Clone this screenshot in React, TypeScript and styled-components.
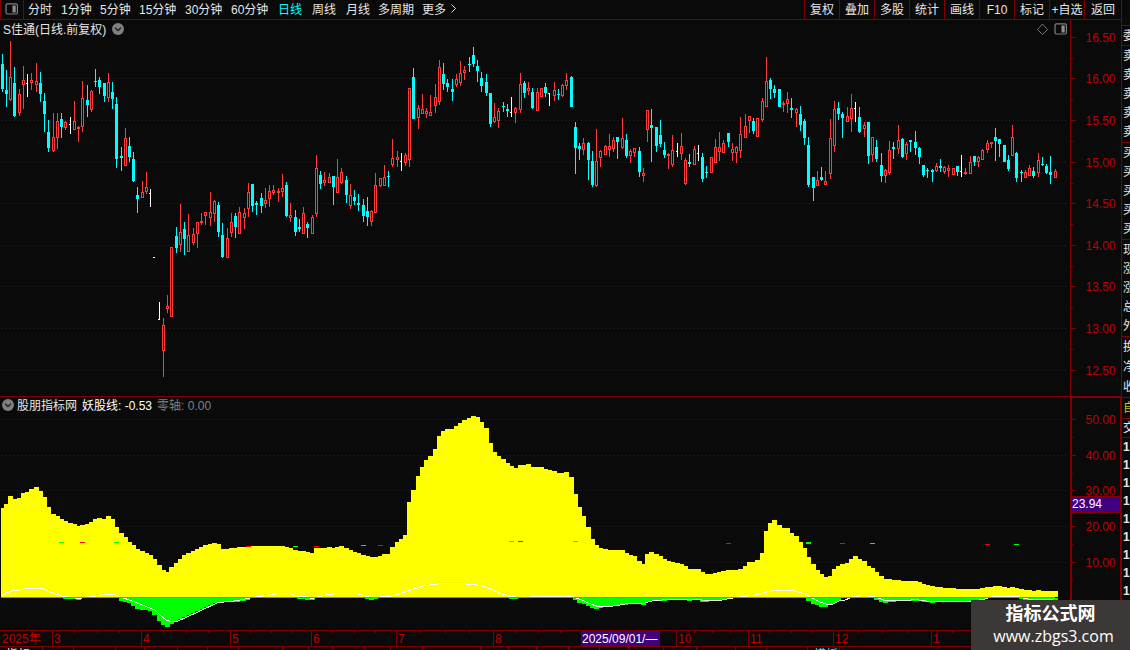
import styled, { createGlobalStyle } from "styled-components"

const colors = {
  background: "#0a0a0a",
  line: "#800000",
  grid: "#6a0808",
  axisText: "#c00000",
  up: "#ff3c3c",
  down: "#00ffff",
  text: "#e6e6e6",
  muted: "#808080",
  badge: "#400080",
}

const GlobalStyle = createGlobalStyle`
  body {
    margin: 0;
    background-color: ${colors.background};
    color: ${colors.text};
    font-family: "Liberation Sans", "Noto Sans CJK SC", sans-serif;
    font-size: 12px;
    line-height: 16px;
    overflow: hidden;
  }
`

const Screen = styled.div`
  display: flex;
  width: 1130px;
  height: 650px;
  overflow: hidden;
  white-space: nowrap;
`
const Main = styled.main`
  display: flex;
  flex-direction: column;
  width: 1121px;
  flex: none;
`
const Header = styled.header`
  display: flex;
  height: 19px;
  border-bottom: 1px solid ${colors.line};
`
const LayoutButton = styled.div`
  box-sizing: border-box;
  width: 24px;
  padding: 3px 0 0 4px;
  border-left: 1px solid ${colors.line};
  border-right: 1px solid ${colors.line};
  line-height: 0;
`
const Periods = styled.nav`
  display: flex;
  flex: 1;
  padding-left: 4px;
`
interface PeriodProps {
  $width: number
  $active?: boolean
}
const Period = styled.span<PeriodProps>`
  width: ${props => props.$width}px;
  line-height: 21px;
  color: ${props => (props.$active ? colors.down : colors.text)};
`
const MoreArrow = styled.svg`
  margin-top: 4px;
`
const Tool = styled.span<{ $width: number }>`
  box-sizing: border-box;
  width: ${props => props.$width}px;
  height: 19px;
  border-left: 1px solid ${colors.line};
  line-height: 21px;
  text-align: center;
`
const Pane = styled.section<{ $height: number }>`
  position: relative;
  height: ${props => props.$height}px;
`
const Plot = styled.svg`
  display: block;
  shape-rendering: crispEdges;
`
const AxisLabel = styled.text`
  fill: ${colors.axisText};
  font-size: 12px;
`
const PaneTitle = styled.div<{ $left: number }>`
  position: absolute;
  left: ${props => props.$left}px;
  top: 0;
  display: flex;
  align-items: center;
  gap: 5px;
  line-height: 16px;
`
const Name = styled.span`
  padding-top: 2px;
`
const Value = styled(Name)<{ $muted?: boolean }>`
  color: ${props => (props.$muted ? colors.muted : "#ffffff")};
`
const FoldSvg = styled.svg<{ $before?: boolean }>`
  margin: ${props => (props.$before ? "0 -2px 0 0" : "0 0 0 1px")};
`
const PaneTools = styled.div`
  position: absolute;
  left: 1036px;
  top: 3px;
  display: flex;
  gap: 6px;
`
const AxisBadge = styled.div`
  position: absolute;
  left: 1072px;
  top: 100px;
  width: 48px;
  height: 15px;
  border-top: 1px solid ${colors.line};
  border-bottom: 1px solid ${colors.line};
  background-color: ${colors.badge};
  color: #ffffff;
  line-height: 15px;
`
const TimeAxis = styled.div`
  position: relative;
  display: flex;
  height: 15px;
  border-top: 1px solid ${colors.line};
  border-bottom: 1px solid ${colors.line};
  color: ${colors.axisText};
`
const Month = styled.span<{ $width: number; $first?: boolean }>`
  box-sizing: border-box;
  width: ${props => props.$width}px;
  height: 15px;
  padding-left: ${props => (props.$first ? 2 : 1)}px;
  border-left: ${props => (props.$first ? "none" : `1px solid ${colors.line}`)};
  line-height: 16px;
`
const TimeTicks = styled.svg`
  position: absolute;
  left: 0;
  top: 0;
`
const DateBadge = styled.span`
  position: absolute;
  left: 581px;
  top: 0;
  width: 78px;
  height: 15px;
  padding-left: 1px;
  background-color: ${colors.badge};
  color: #ffffff;
  line-height: 16px;
`
const Tabs = styled.footer`
  display: flex;
  height: 3px;
  overflow: hidden;
`
const Tab = styled.span<{ $width: number; $accent?: boolean }>`
  box-sizing: border-box;
  width: ${props => props.$width}px;
  padding-left: 6px;
  border-right: 1px solid ${colors.line};
  color: ${props => (props.$accent ? colors.down : colors.text)};
  line-height: 17px;
`
const Side = styled.aside`
  display: flex;
  flex-direction: column;
  box-sizing: border-box;
  width: 9px;
  padding-top: 25px;
  border-left: 1px solid ${colors.line};
  overflow: hidden;
`
interface SideGroupProps {
  $height: number
  $color?: string
  $bold?: boolean
}
const SideGroup = styled.div<SideGroupProps>`
  display: flex;
  flex-direction: column;
  flex: none;
  box-sizing: border-box;
  height: ${props => props.$height}px;
  padding-left: 1px;
  border-top: 1px solid ${colors.line};
  color: ${props => props.$color || colors.text};
  font-weight: ${props => (props.$bold ? 700 : 400)};
`
const SideRow = styled.span`
  display: flex;
  flex: 1;
  align-items: center;
`
const Watermark = styled.div`
  position: absolute;
  left: 971px;
  top: 600px;
  display: flex;
  flex-direction: column;
  align-items: center;
  width: 159px;
  height: 50px;
  box-sizing: border-box;
  background-color: #3d3838;
  color: #ffffff;
`
const WatermarkName = styled.strong`
  padding-top: 3px;
  font-size: 18px;
  line-height: 23px;
`
const WatermarkUrl = styled.span`
  padding-left: 6px;
  font-family: "Open Sans", sans-serif;
  font-size: 16px;
  line-height: 20px;
`

type Kind = "u" | "d" | "f"
// kind, x, high, body top, body bottom, low
type Candle = [Kind, number, number, number, number, number]

const candles: Candle[] = [
  ["d", 2, 54, 64, 89, 92], ["d", 6, 70, 90, 94, 107], ["u", 10, 41, 77, 100, 101], ["d", 14, 67, 83, 116, 117],
  ["u", 19, 89, 94, 113, 116], ["u", 23, 66, 80, 85, 109], ["f", 27, 74, 83, 84, 97], ["u", 31, 73, 80, 83, 90],
  ["u", 36, 63, 81, 85, 92], ["d", 40, 72, 83, 94, 102], ["d", 44, 93, 101, 114, 132], ["d", 48, 120, 132, 148, 152],
  ["u", 53, 113, 137, 151, 152], ["u", 57, 113, 121, 138, 149], ["d", 61, 113, 119, 127, 138], ["u", 65, 121, 122, 128, 130],
  ["f", 70, 117, 124, 125, 134], ["u", 74, 101, 121, 130, 130], ["u", 78, 126, 127, 129, 142], ["u", 82, 81, 98, 127, 132],
  ["d", 87, 85, 100, 105, 117], ["u", 91, 90, 91, 110, 112], ["d", 95, 69, 81, 82, 87], ["d", 99, 77, 80, 87, 94],
  ["d", 104, 83, 83, 96, 102], ["u", 108, 73, 82, 98, 102], ["d", 112, 82, 92, 99, 109], ["d", 116, 97, 104, 159, 168],
  ["d", 121, 147, 156, 158, 171], ["u", 125, 128, 138, 166, 166], ["d", 129, 137, 146, 157, 162], ["d", 133, 152, 159, 181, 182],
  ["d", 137, 187, 195, 199, 213], ["u", 142, 181, 192, 198, 198], ["u", 146, 172, 187, 192, 194], ["f", 150, 189, 193, 194, 207],
  ["f", 154, 257, 257, 258, 258], ["f", 159, 302, 319, 320, 320], ["u", 163, 318, 325, 351, 377], ["u", 167, 295, 306, 309, 313],
  ["u", 171, 247, 247, 317, 317], ["d", 176, 227, 236, 248, 253], ["u", 180, 204, 232, 245, 252], ["d", 184, 222, 229, 239, 255],
  ["u", 188, 214, 235, 252, 252], ["u", 193, 228, 234, 243, 245], ["u", 197, 222, 222, 234, 248], ["u", 201, 213, 221, 223, 225],
  ["u", 205, 212, 212, 216, 225], ["u", 210, 192, 212, 218, 226], ["u", 214, 200, 201, 214, 222], ["d", 218, 202, 205, 232, 237],
  ["d", 222, 223, 235, 257, 258], ["u", 227, 228, 238, 258, 258], ["u", 231, 213, 222, 233, 237], ["d", 235, 213, 216, 227, 238],
  ["u", 239, 207, 212, 234, 234], ["u", 244, 208, 213, 218, 229], ["u", 248, 183, 192, 209, 217], ["d", 252, 184, 184, 206, 212],
  ["d", 256, 201, 203, 205, 215], ["d", 261, 193, 198, 206, 213], ["u", 265, 188, 200, 204, 208], ["u", 269, 185, 191, 199, 207],
  ["u", 273, 185, 190, 193, 195], ["u", 278, 188, 191, 193, 202], ["u", 282, 174, 188, 192, 197], ["d", 286, 182, 185, 216, 217],
  ["u", 290, 203, 215, 218, 222], ["d", 295, 210, 217, 232, 236], ["d", 299, 219, 227, 229, 232], ["u", 303, 207, 213, 234, 234],
  ["d", 307, 222, 224, 228, 238], ["u", 312, 215, 217, 234, 234], ["u", 316, 155, 168, 214, 217], ["d", 320, 171, 175, 184, 189],
  ["u", 324, 172, 180, 183, 186], ["u", 329, 173, 177, 183, 183], ["d", 333, 176, 176, 187, 205], ["u", 337, 159, 177, 193, 193],
  ["u", 341, 168, 172, 183, 184], ["d", 346, 176, 180, 195, 203], ["u", 350, 184, 195, 206, 209], ["d", 354, 190, 197, 201, 205],
  ["d", 358, 194, 203, 205, 211], ["d", 363, 199, 205, 216, 222], ["d", 367, 197, 211, 217, 226], ["u", 371, 210, 211, 222, 226],
  ["u", 375, 173, 185, 213, 213], ["u", 380, 178, 178, 186, 187], ["u", 384, 165, 177, 186, 186], ["d", 388, 171, 176, 177, 187],
  ["u", 392, 139, 158, 165, 167], ["u", 397, 151, 157, 160, 167], ["f", 401, 153, 161, 162, 171], ["u", 405, 153, 155, 163, 166],
  ["u", 409, 88, 88, 160, 167], ["d", 413, 68, 77, 119, 119], ["u", 418, 105, 108, 118, 129], ["u", 422, 94, 109, 114, 114],
  ["u", 426, 108, 111, 114, 118], ["u", 430, 95, 112, 116, 116], ["u", 435, 84, 97, 106, 113], ["u", 439, 60, 67, 102, 105],
  ["d", 443, 63, 74, 84, 90], ["d", 447, 79, 83, 87, 92], ["d", 452, 79, 89, 92, 101], ["u", 456, 74, 79, 85, 87],
  ["u", 460, 61, 73, 83, 86], ["u", 464, 66, 70, 73, 80], ["d", 469, 57, 64, 65, 72], ["d", 473, 47, 55, 64, 67],
  ["d", 477, 60, 66, 71, 82], ["d", 481, 72, 78, 86, 92], ["d", 486, 74, 82, 93, 96], ["d", 490, 93, 93, 124, 127],
  ["u", 494, 103, 117, 122, 123], ["u", 498, 108, 111, 121, 128], ["d", 503, 102, 106, 107, 112], ["d", 507, 104, 109, 111, 117],
  ["f", 511, 97, 112, 113, 117], ["u", 515, 107, 108, 113, 123], ["u", 520, 73, 84, 110, 113], ["d", 524, 81, 83, 93, 98],
  ["u", 528, 82, 88, 91, 95], ["d", 532, 88, 92, 108, 109], ["u", 537, 88, 92, 111, 111], ["u", 541, 88, 88, 97, 97],
  ["d", 545, 83, 87, 93, 97], ["f", 549, 93, 93, 94, 106], ["u", 554, 82, 90, 96, 101], ["d", 558, 89, 94, 95, 100],
  ["u", 562, 84, 85, 96, 97], ["u", 566, 73, 80, 86, 90], ["d", 571, 76, 77, 107, 107], ["d", 575, 122, 127, 148, 174],
  ["d", 579, 143, 146, 149, 160], ["u", 583, 138, 143, 150, 155], ["d", 588, 142, 143, 160, 180], ["d", 592, 151, 161, 185, 187],
  ["u", 596, 129, 161, 186, 187], ["u", 600, 150, 151, 158, 167], ["u", 605, 145, 146, 155, 155], ["u", 609, 134, 146, 150, 157],
  ["u", 613, 137, 140, 149, 152], ["d", 617, 137, 137, 142, 159], ["u", 622, 118, 138, 148, 149], ["d", 626, 134, 140, 156, 158],
  ["u", 630, 149, 151, 156, 163], ["u", 634, 148, 148, 153, 157], ["d", 639, 147, 151, 172, 177], ["u", 643, 168, 173, 176, 182],
  ["u", 647, 110, 110, 130, 142], ["d", 651, 109, 125, 128, 162], ["d", 656, 127, 127, 146, 152], ["d", 660, 120, 135, 144, 147],
  ["d", 664, 142, 150, 155, 158], ["u", 668, 153, 154, 156, 169], ["u", 672, 135, 150, 165, 167], ["f", 677, 143, 151, 152, 157],
  ["u", 681, 133, 146, 154, 160], ["u", 685, 158, 160, 184, 185], ["d", 689, 154, 162, 164, 167], ["u", 694, 146, 149, 165, 165],
  ["f", 698, 145, 153, 154, 161], ["d", 702, 153, 157, 179, 182], ["d", 706, 166, 172, 173, 178], ["u", 711, 157, 157, 173, 173],
  ["u", 715, 139, 147, 163, 163], ["u", 719, 132, 147, 152, 161], ["u", 723, 140, 143, 153, 153], ["d", 728, 133, 133, 142, 147],
  ["u", 732, 143, 149, 153, 161], ["u", 736, 146, 147, 153, 163], ["u", 740, 117, 134, 151, 158], ["u", 745, 114, 126, 138, 138],
  ["u", 749, 116, 116, 121, 133], ["d", 753, 118, 121, 131, 134], ["u", 757, 118, 118, 137, 137], ["u", 762, 98, 101, 120, 122],
  ["u", 766, 57, 81, 107, 107], ["d", 770, 78, 80, 89, 99], ["d", 774, 85, 89, 93, 98], ["d", 779, 89, 89, 107, 107],
  ["u", 783, 101, 103, 105, 112], ["u", 787, 92, 99, 104, 113], ["d", 791, 98, 108, 110, 118], ["u", 796, 108, 109, 113, 127],
  ["d", 800, 106, 114, 125, 131], ["d", 804, 119, 121, 138, 145], ["d", 808, 137, 145, 185, 187], ["d", 813, 177, 177, 188, 201],
  ["u", 817, 171, 180, 186, 186], ["d", 821, 167, 177, 180, 181], ["u", 825, 171, 181, 185, 185], ["u", 830, 119, 138, 174, 179],
  ["u", 834, 101, 109, 146, 152], ["d", 838, 102, 108, 114, 120], ["d", 842, 112, 114, 118, 138], ["u", 847, 107, 116, 122, 122],
  ["u", 851, 94, 108, 119, 132], ["f", 855, 102, 108, 109, 122], ["d", 859, 107, 117, 132, 133], ["u", 864, 122, 125, 129, 137],
  ["d", 868, 122, 122, 156, 164], ["u", 872, 137, 137, 155, 162], ["d", 876, 140, 147, 159, 162], ["d", 881, 153, 165, 176, 182],
  ["u", 885, 169, 170, 176, 183], ["u", 889, 141, 150, 173, 175], ["d", 893, 142, 147, 149, 159], ["u", 898, 125, 140, 149, 154],
  ["d", 902, 138, 139, 157, 158], ["u", 906, 142, 144, 154, 160], ["d", 910, 140, 140, 142, 152], ["d", 915, 131, 142, 148, 155],
  ["d", 919, 147, 148, 157, 164], ["d", 923, 165, 165, 175, 177], ["d", 927, 168, 170, 171, 178], ["d", 932, 169, 170, 172, 182],
  ["u", 936, 163, 166, 171, 172], ["d", 940, 159, 166, 168, 172], ["u", 944, 166, 167, 172, 174], ["u", 948, 165, 168, 171, 177],
  ["u", 953, 168, 168, 175, 175], ["d", 957, 166, 166, 172, 176], ["f", 961, 155, 171, 172, 177], ["u", 965, 168, 172, 174, 175],
  ["u", 970, 156, 162, 174, 174], ["d", 974, 156, 156, 162, 166], ["u", 978, 156, 157, 162, 167], ["u", 982, 149, 150, 160, 160],
  ["u", 987, 140, 143, 150, 153], ["u", 991, 142, 142, 144, 148], ["d", 995, 128, 137, 141, 161], ["d", 999, 139, 139, 144, 157],
  ["d", 1004, 145, 145, 162, 162], ["d", 1008, 155, 160, 169, 171], ["u", 1012, 125, 137, 156, 156], ["d", 1016, 152, 153, 178, 182],
  ["d", 1021, 170, 172, 173, 182], ["u", 1025, 170, 172, 178, 178], ["u", 1029, 165, 168, 176, 176], ["d", 1033, 167, 171, 176, 178],
  ["u", 1038, 153, 160, 173, 177], ["d", 1042, 157, 164, 165, 166], ["d", 1046, 164, 166, 173, 174], ["d", 1050, 156, 172, 175, 184],
  ["u", 1055, 169, 171, 178, 178],
]

type Point = [number, number]

// each step holds its level until the next x
const strength: Point[] = [
  [1, 508], [4, 504], [8, 496], [13, 499], [17, 498], [21, 493], [25, 492], [29, 489], [34, 487], [39, 491],
  [43, 497], [47, 507], [51, 514], [56, 516], [60, 519], [64, 521], [68, 523], [73, 524], [77, 526], [80, 525],
  [85, 524], [89, 522], [93, 519], [97, 518], [102, 519], [106, 516], [111, 519], [115, 527], [119, 533], [124, 537],
  [128, 542], [132, 545], [136, 549], [140, 551], [145, 553], [149, 555], [153, 559], [157, 565], [162, 570], [166, 572],
  [169, 567], [174, 563], [178, 559], [182, 555], [186, 553], [191, 551], [195, 549], [199, 547], [203, 545], [208, 544],
  [212, 543], [217, 544], [221, 549], [229, 548], [237, 547], [251, 546], [285, 547], [289, 548], [293, 550], [298, 551],
  [306, 552], [310, 553], [314, 548], [327, 547], [332, 548], [335, 547], [339, 546], [344, 548], [349, 550], [353, 552],
  [357, 553], [361, 555], [366, 556], [370, 557], [378, 556], [382, 554], [390, 547], [395, 542], [399, 539], [403, 535],
  [407, 502], [411, 490], [416, 476], [420, 467], [424, 460], [428, 456], [433, 449], [437, 436], [441, 431], [445, 429],
  [454, 426], [458, 423], [462, 420], [467, 418], [471, 416], [476, 417], [480, 422], [484, 428], [489, 443], [493, 452],
  [497, 456], [501, 459], [506, 463], [510, 466], [514, 468], [518, 465], [526, 464], [531, 467], [544, 469], [548, 470],
  [552, 471], [557, 473], [564, 472], [569, 477], [574, 494], [578, 507], [582, 516], [586, 527], [591, 539], [595, 545],
  [599, 548], [603, 549], [608, 550], [625, 553], [629, 555], [633, 556], [637, 561], [642, 564], [645, 554], [649, 552],
  [654, 554], [659, 556], [663, 559], [667, 561], [671, 562], [675, 563], [680, 564], [684, 566], [688, 569], [701, 572],
  [705, 574], [713, 573], [717, 572], [721, 571], [726, 570], [738, 569], [743, 566], [747, 562], [755, 560], [760, 553],
  [764, 531], [768, 523], [772, 520], [777, 525], [782, 528], [790, 533], [794, 536], [799, 542], [803, 548], [807, 557],
  [811, 564], [816, 570], [820, 574], [824, 577], [828, 576], [832, 569], [836, 566], [840, 564], [845, 563], [849, 559],
  [853, 556], [858, 559], [862, 561], [867, 566], [871, 568], [875, 572], [879, 576], [884, 579], [892, 580], [901, 581],
  [918, 582], [922, 584], [926, 585], [930, 586], [935, 587], [943, 588], [956, 589], [980, 588], [985, 587], [993, 586],
  [1002, 587], [1007, 588], [1010, 587], [1015, 588], [1019, 589], [1024, 590], [1032, 591], [1036, 590], [1041, 591],
]

const weakness: Point[] = [
  [63, 599], [76, 600], [81, 598], [119, 601], [123, 602], [127, 603], [131, 606], [135, 609], [140, 610], [148, 611],
  [152, 615], [157, 621], [161, 625], [165, 627], [170, 624], [174, 622], [178, 619], [182, 617], [187, 615], [191, 613],
  [195, 611], [200, 609], [204, 607], [208, 605], [213, 603], [218, 602], [240, 601], [246, 600], [250, 598], [297, 599],
  [305, 600], [315, 598], [365, 599], [369, 600], [374, 599], [378, 598], [509, 599], [518, 598], [573, 600], [577, 603],
  [582, 604], [586, 606], [590, 608], [594, 609], [599, 608], [603, 607], [607, 606], [620, 605], [628, 604], [641, 605],
  [646, 602], [650, 601], [667, 600], [687, 601], [692, 600], [700, 602], [709, 601], [722, 599], [733, 598], [806, 601],
  [811, 604], [815, 605], [819, 607], [828, 605], [833, 603], [837, 601], [841, 598], [874, 600], [879, 602], [883, 603],
  [888, 602], [896, 601], [922, 602], [930, 603], [935, 602], [971, 602], [985, 598], [1019, 599], [1023, 600],
]

const signal: Point[] = [
  [2, 596], [6, 593], [12, 591], [20, 590], [26, 588.5], [43, 588.5], [50, 592], [56, 594], [62, 596], [68, 597],
  [78, 598.5], [93, 596.5], [104, 594.5], [115, 594.5], [120, 597], [125, 598.5], [135, 602], [147, 607], [155, 610], [160, 615],
  [166, 620], [171, 621.5], [178, 621], [187, 617], [200, 611], [218, 602.5], [230, 601.5], [238, 600.5], [245, 599], [255, 597],
  [267, 595.5], [277, 593.5], [289, 593.5], [297, 596], [305, 596.5], [312, 598.5], [320, 596.5], [328, 594.5], [338, 593.5],
  [356, 593.5], [365, 596], [369, 597], [380, 597], [390, 596.5], [399, 594], [403, 592.5], [412, 589.5], [423, 586],
  [433, 584.5], [443, 583.5], [455, 583.5], [475, 584.5], [487, 587.5], [495, 591], [503, 594.5], [510, 596.5], [520, 597.5],
  [540, 596.5], [573, 596.5], [577, 598.5], [582, 600], [587, 602.5], [592, 604.5], [598, 606.5], [610, 606.5], [620, 605],
  [628, 603.5], [643, 603.5], [652, 601], [667, 599.5], [700, 599.5], [703, 600.5], [720, 600.5], [727, 599], [733, 598],
  [743, 596.5], [755, 595], [763, 593], [773, 590.5], [793, 590.5], [805, 594], [812, 598], [820, 602], [827, 604.5],
  [832, 604.5], [840, 600.5], [845, 600], [850, 598], [855, 596.5], [863, 595.5], [873, 596.5], [878, 598], [885, 600.5],
  [907, 600.5], [915, 599.5], [922, 600.5], [930, 601.5], [971, 601.5], [985, 599], [993, 596.5], [1019, 596.5],
  [1024, 598.5], [1032, 599.5], [1053, 599.5],
]

// x, y, buy mark
const marks: [number, number, boolean][] = [
  [59, 542, false], [80, 542, true], [114, 542, false], [246, 546, true], [293, 546, false], [314, 546, true],
  [361, 545, false], [378, 545, true], [509, 541, false], [518, 541, true], [573, 541, false], [726, 543, true],
  [806, 542, false], [840, 543, true], [870, 543, false], [985, 544, true], [1014, 544, false],
]

const priceTicks: [string, number][] = [
  ["16.50", 37], ["16.00", 78], ["15.50", 120], ["15.00", 162], ["14.50", 203],
  ["14.00", 245], ["13.50", 286], ["13.00", 328], ["12.50", 370],
]
const strengthTicks: [string, number][] = [
  ["50.00", 419], ["40.00", 455], ["30.00", 490], ["20.00", 526], ["10.00", 562],
]

const periods: [string, number][] = [
  ["分时", 33], ["1分钟", 39], ["5分钟", 39], ["15分钟", 46], ["30分钟", 46], ["60分钟", 47],
  ["日线", 34], ["周线", 34], ["月线", 32], ["多周期", 44], ["更多", 28],
]
const tools = ["复权", "叠加", "多股", "统计", "画线", "F10", "标记", "+自选", "返回"]

const months: [string, number][] = [
  ["2025年", 52], ["3", 89], ["4", 89], ["5", 81], ["6", 85], ["7", 97], ["8", 183],
  ["10", 72], ["11", 85], ["12", 98], ["1", 190],
]
const weekTicks = [
  74, 97, 119, 163, 186, 208, 250, 271, 291, 332, 354, 375, 420, 445, 469, 515, 538, 560, 694, 712, 730, 769, 791,
  812, 858, 882, 907, 952,
]
const tabWidths = [43, 31, 42, 29, 33, 30, 31, 44, 26, 24, 32, 26, 32, 58, 28, 28, 32, 31, 29, 35, 33, 39, 31, 41, 32]

const sideGroups: { rows: string; height: number; color?: string; bold?: boolean }[] = [
  { rows: "委", height: 20 },
  { rows: "卖卖卖卖卖", height: 97 },
  { rows: "买买买买买", height: 97 },
  { rows: "现涨涨总外", height: 97 },
  { rows: "换净收", height: 61 },
  { rows: "自", height: 21, color: "#c8c800" },
  { rows: "交", height: 19 },
  { rows: "111111111", height: 163, bold: true },
]

const stepPath = (steps: Point[], base: number, end: number) =>
  `M${steps[0][0]} ${base}` +
  steps.map(([x, y], i) => `V${y}H${i + 1 < steps.length ? steps[i + 1][0] : end}`).join("") +
  `V${base}Z`

const CandleShape = ({ candle }: { candle: Candle }) => {
  const [kind, x, high, top, bottom, low] = candle
  if (kind === "f") {
    return (
      <g fill="#ffffff">
        <rect x={x} y={high} width={1} height={low - high} />
        <rect x={x - 1} y={top} width={2} height={1} />
      </g>
    )
  }
  return (
    <g fill={kind === "u" ? colors.up : colors.down}>
      <rect x={x} y={high} width={1} height={low - high} />
      <rect x={x - 1} y={top} width={3} height={bottom - top} />
      {kind === "u" && bottom - top > 2 && (
        <rect x={x} y={top + 1} width={1} height={bottom - top - 2} fill={colors.background} />
      )}
    </g>
  )
}

const GridLines = ({ ticks }: { ticks: [string, number][] }) => (
  <g stroke={colors.grid} strokeDasharray="1 3">
    {ticks.map(([label, y]) => (
      <line key={label} x1={1} x2={1068} y1={y + 0.5} y2={y + 0.5} />
    ))}
  </g>
)

interface AxisProps {
  ticks: [string, number][]
  minor: number
  minorEnd: number
}
const Axis = ({ ticks, minor, minorEnd }: AxisProps) => (
  <g>
    {ticks.map(([label, y]) => (
      <g key={label} fill={colors.line}>
        <rect x={1070} y={y} width={6} height={1} />
        {y + minor < minorEnd && <rect x={1070} y={y + minor} width={3} height={1} />}
        <AxisLabel x={1085.5} y={y + 5}>
          {label}
        </AxisLabel>
      </g>
    ))}
  </g>
)

const LayoutIcon = () => (
  <svg width="14" height="12" viewBox="0 0 14 12">
    <rect x="1" y="0.8" width="11.4" height="10.2" rx="1.5" fill="none" stroke={colors.muted} strokeWidth="1.2" />
    <rect x="7.5" y="2.5" width="3.2" height="7" fill="#909090" />
  </svg>
)

const FoldIcon = ({ before }: { before?: boolean }) => (
  <FoldSvg $before={before} width="12" height="12" viewBox="0 0 12 12">
    <circle cx="6" cy="6" r="6" fill={colors.muted} />
    <path d="M3 4.8 6 7.6 9 4.8" fill="none" stroke="#202020" strokeWidth="1.4" />
  </FoldSvg>
)

const App = () => {
  return (
    <Screen>
      <GlobalStyle />
      <Main>
        <Header>
          <LayoutButton>
            <LayoutIcon />
          </LayoutButton>
          <Periods>
            {periods.map(([label, width]) => (
              <Period key={label} $width={width} $active={label === "日线"}>
                {label}
              </Period>
            ))}
            <MoreArrow width="7" height="10" viewBox="0 0 7 10">
              <path d="M1.5 0.5 5.5 4.5 1.5 8.5" fill="none" stroke={colors.text} />
            </MoreArrow>
          </Periods>
          {tools.map((label, index) => (
            <Tool key={label} $width={index === tools.length - 1 ? 37 : 35}>
              {label}
            </Tool>
          ))}
        </Header>
        <Pane $height={376}>
          <Plot width="1121" height="376" viewBox="0 20 1121 376">
            <GridLines ticks={priceTicks.slice(1)} />
            {candles.map(candle => (
              <CandleShape key={candle[1]} candle={candle} />
            ))}
            <rect x={1070} y={20} width={1} height={376} fill={colors.line} />
            <Axis ticks={priceTicks} minor={21} minorEnd={360} />
          </Plot>
          <PaneTitle $left={3}>
            <Name>S佳通(日线.前复权)</Name>
            <FoldIcon />
          </PaneTitle>
          <PaneTools>
            <svg width="12" height="12" viewBox="0 0 12 12">
              <path d="M6.5 1 11.5 6.5 6.5 11.5 1.5 6.5Z" fill="none" stroke={colors.muted} strokeWidth="0.9" />
            </svg>
            <LayoutIcon />
          </PaneTools>
        </Pane>
        <Pane $height={234}>
          <Plot width="1121" height="234" viewBox="0 396 1121 234">
            <GridLines ticks={strengthTicks} />
            <path d={stepPath(strength, 597, 1058)} fill="#ffff00" />
            <path d={stepPath(weakness, 598, 1058)} fill="#00ff00" />
            {marks.map(([x, y, buy]) => (
              <rect key={x} x={x} y={y} width={5} height={x === 806 ? 2 : 1} fill={buy ? "#ff0000" : "#00ff00"} />
            ))}
            <polyline points={signal.join(" ")} fill="none" stroke="#ffffff" />
            <rect x={1} y={597} width={1054} height={1} fill={colors.muted} />
            <g fill={colors.line}>
              <rect x={0} y={396} width={1121} height={1} />
              <rect x={1070} y={396} width={51} height={2} />
              <rect x={1070} y={396} width={2} height={234} />
              <rect x={1120} y={396} width={1} height={234} />
            </g>
            <Axis ticks={strengthTicks} minor={18} minorEnd={600} />
          </Plot>
          <PaneTitle $left={2}>
            <FoldIcon before />
            <Name>股朋指标网</Name>
            <Value>妖股线: -0.53</Value>
            <Value $muted>零轴: 0.00</Value>
          </PaneTitle>
          <AxisBadge>23.94</AxisBadge>
        </Pane>
        <TimeAxis>
          {months.map(([label, width], index) => (
            <Month key={label} $width={width} $first={index === 0}>
              {label}
            </Month>
          ))}
          <TimeTicks width="1121" height="2">
            {weekTicks.map(x => (
              <rect key={x} x={x} y={0} width={1} height={2} fill={colors.line} />
            ))}
          </TimeTicks>
          <DateBadge>2025/09/01/—</DateBadge>
        </TimeAxis>
        <Tabs>
          {tabWidths.map((width, index) => (
            <Tab key={index} $width={width} $accent={index === 24}>
              {index === 0 && "指标"}
              {index === 24 && "模板"}
            </Tab>
          ))}
        </Tabs>
      </Main>
      <Side>
        {sideGroups.map(({ rows, height, color, bold }) => (
          <SideGroup key={rows} $height={height} $color={color} $bold={bold}>
            {rows.split("").map((label, index) => (
              <SideRow key={index}>{label}</SideRow>
            ))}
          </SideGroup>
        ))}
      </Side>
      <Watermark>
        <WatermarkName>指标公式网</WatermarkName>
        <WatermarkUrl>www.zbgs3.com</WatermarkUrl>
      </Watermark>
    </Screen>
  )
}

export default App
